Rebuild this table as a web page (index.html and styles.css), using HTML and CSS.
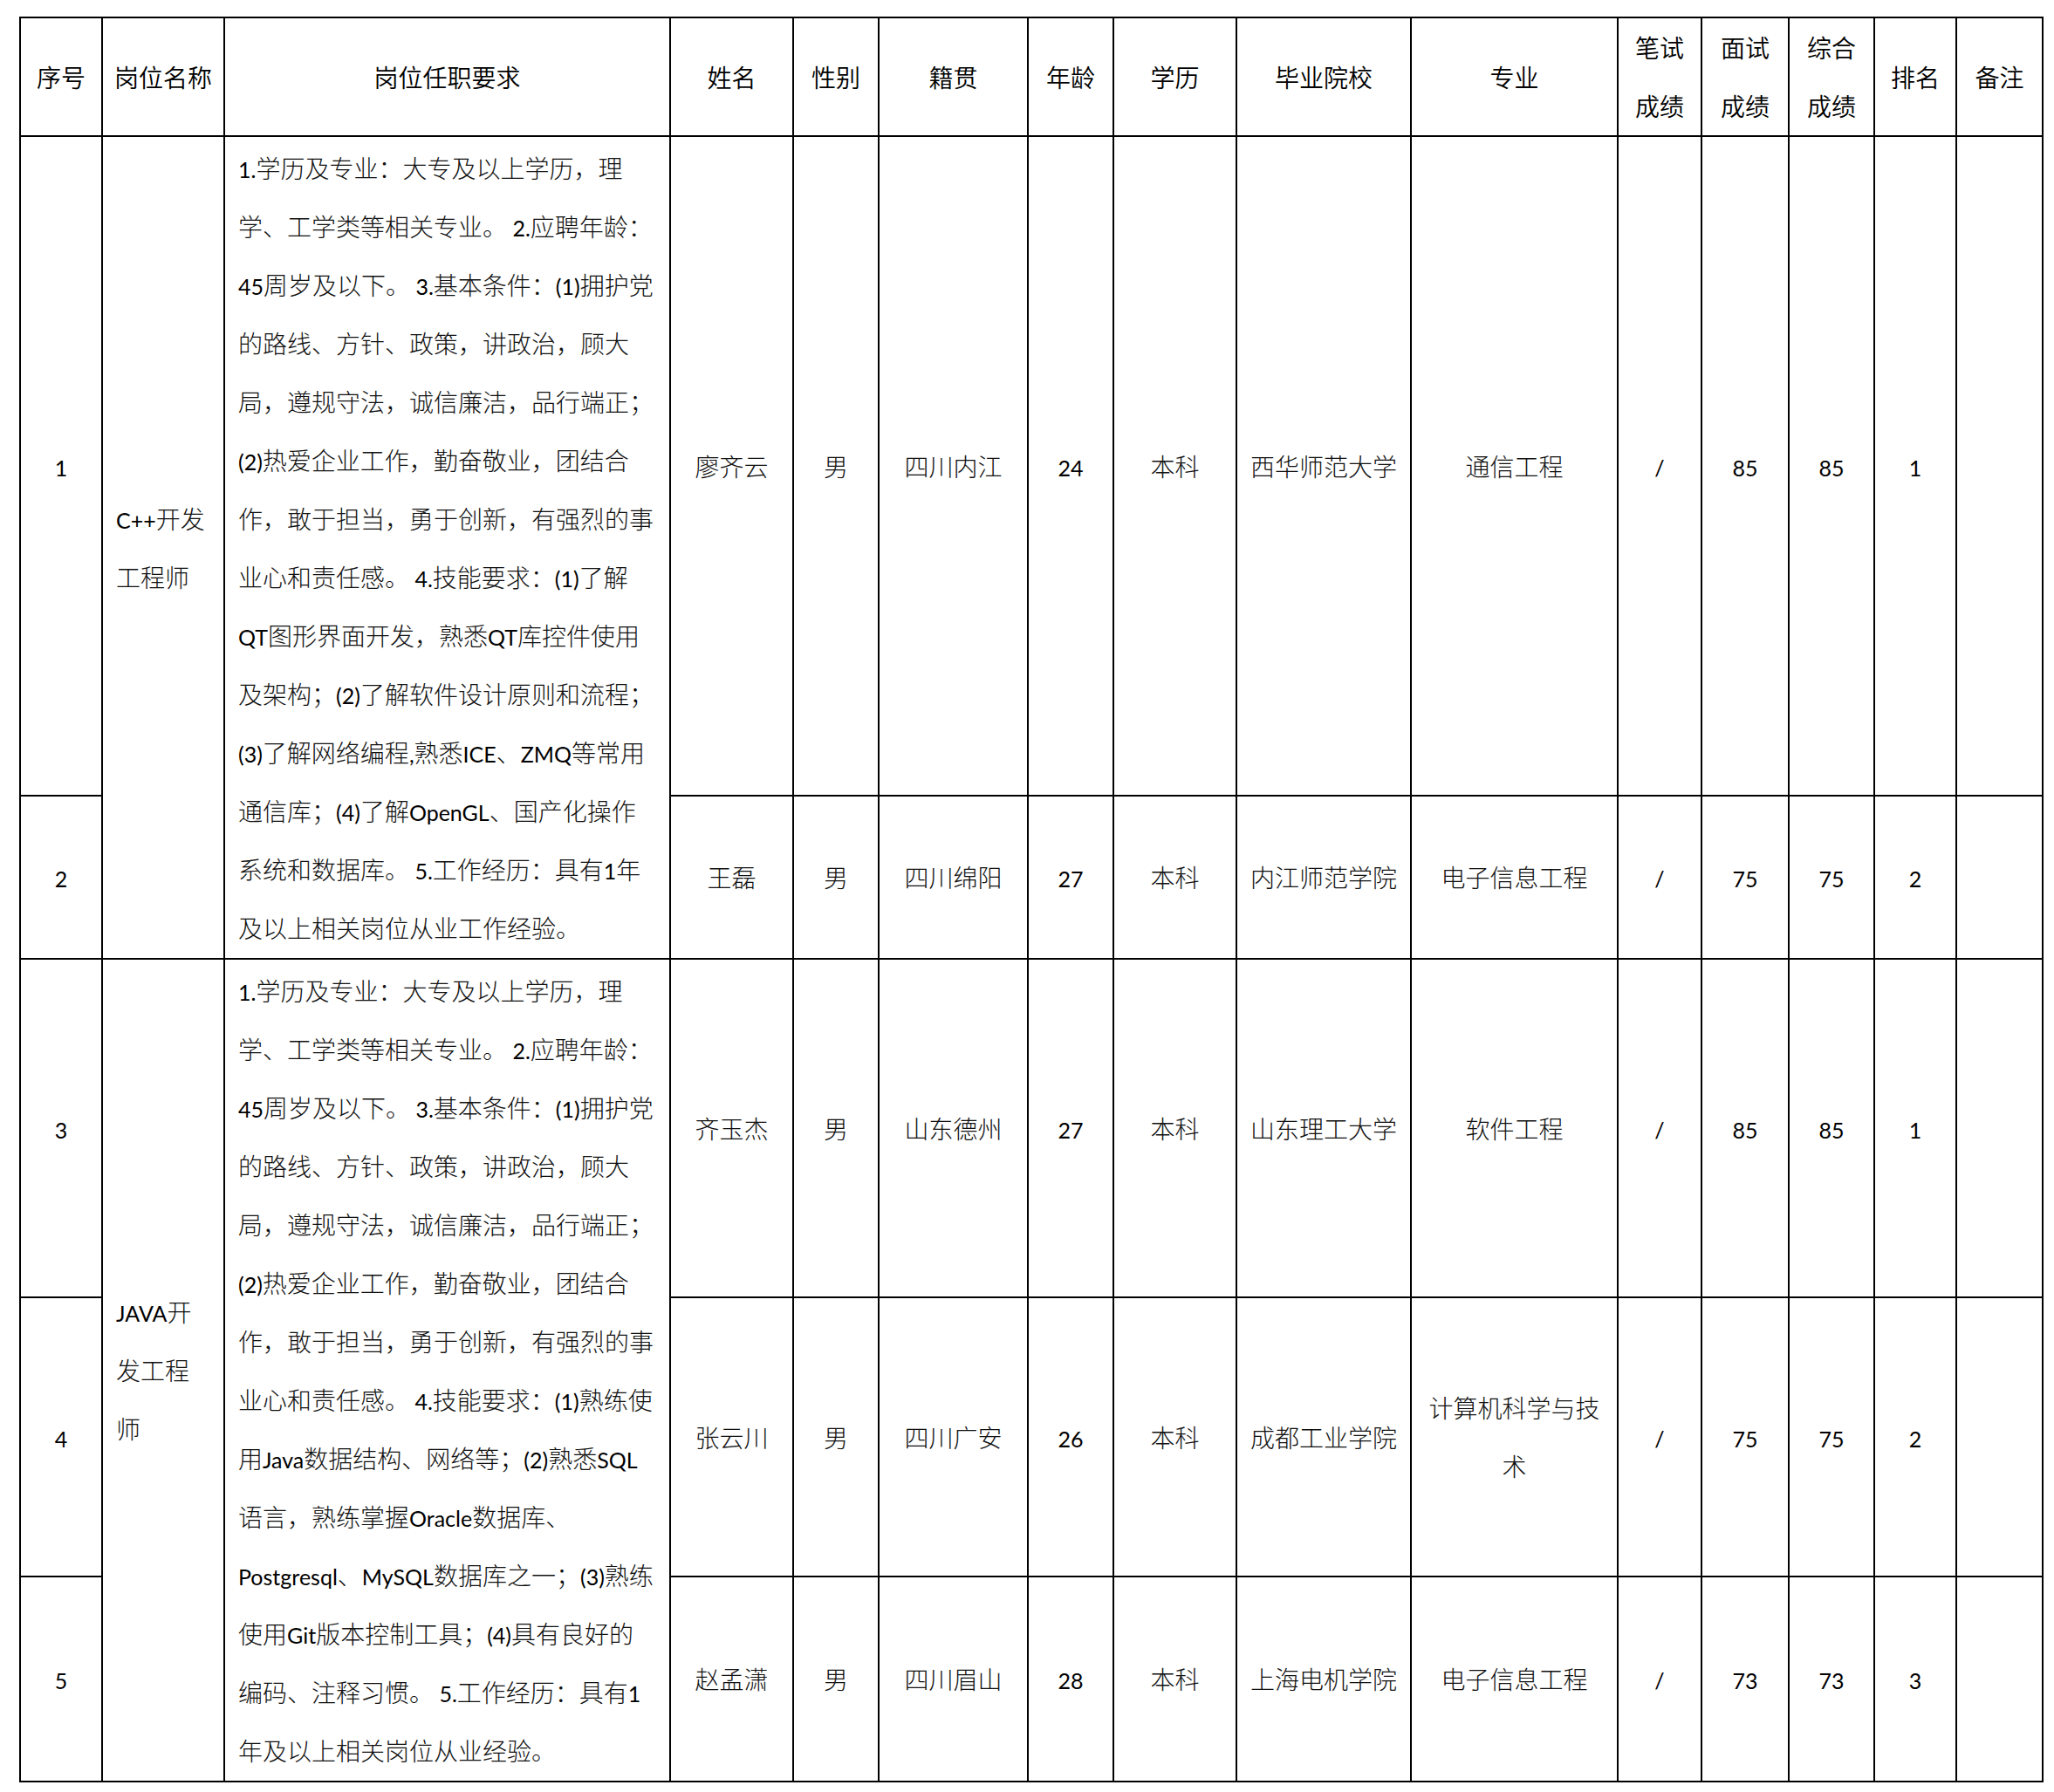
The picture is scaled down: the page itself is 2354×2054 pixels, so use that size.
FILE: index.html
```html
<!DOCTYPE html>
<html lang="zh-CN">
<head>
<meta charset="utf-8">
<title>面试成绩公示</title>
<link rel="stylesheet" href="styles.css">
</head>
<body>
<table class="sheet">
  <colgroup>
    <col class="c-no">
    <col class="c-post">
    <col class="c-req">
    <col class="c-name">
    <col class="c-sex">
    <col class="c-origin">
    <col class="c-age">
    <col class="c-edu">
    <col class="c-school">
    <col class="c-major">
    <col class="c-written">
    <col class="c-interview">
    <col class="c-total">
    <col class="c-rank">
    <col class="c-note">
  </colgroup>
  <thead>
    <tr class="r-head">
      <th>序号</th>
      <th>岗位名称</th>
      <th>岗位任职要求</th>
      <th>姓名</th>
      <th>性别</th>
      <th>籍贯</th>
      <th>年龄</th>
      <th>学历</th>
      <th>毕业院校</th>
      <th>专业</th>
      <th>笔试<br>成绩</th>
      <th>面试<br>成绩</th>
      <th>综合<br>成绩</th>
      <th>排名</th>
      <th>备注</th>
    </tr>
  </thead>
  <tbody>
    <tr class="r1">
      <td><span class="en">1</span></td>
      <td class="post" rowspan="2"><span class="en">C++</span>开发<br>工程师</td>
      <td class="req" rowspan="2">
        <div class="ln"><span class="en">1.</span>学历及专业：大专及以上学历，理</div>
        <div class="ln">学、工学类等相关专业。<span class="en"> 2.</span>应聘年龄：</div>
        <div class="ln"><span class="en">45</span>周岁及以下。<span class="en"> 3.</span>基本条件：<span class="en">(1)</span>拥护党</div>
        <div class="ln">的路线、方针、政策，讲政治，顾大</div>
        <div class="ln">局，遵规守法，诚信廉洁，品行端正；</div>
        <div class="ln"><span class="en">(2)</span>热爱企业工作，勤奋敬业，团结合</div>
        <div class="ln">作，敢于担当，勇于创新，有强烈的事</div>
        <div class="ln">业心和责任感。<span class="en"> 4.</span>技能要求：<span class="en">(1)</span>了解</div>
        <div class="ln"><span class="en">QT</span>图形界面开发，熟悉<span class="en">QT</span>库控件使用</div>
        <div class="ln">及架构；<span class="en">(2)</span>了解软件设计原则和流程；</div>
        <div class="ln"><span class="en">(3)</span>了解网络编程<span class="en">,</span>熟悉<span class="en">ICE</span>、<span class="en">ZMQ</span>等常用</div>
        <div class="ln">通信库；<span class="en">(4)</span>了解<span class="en">OpenGL</span>、国产化操作</div>
        <div class="ln">系统和数据库。<span class="en"> 5.</span>工作经历：具有<span class="en">1</span>年</div>
        <div class="ln">及以上相关岗位从业工作经验。</div>
      </td>
      <td>廖齐云</td>
      <td>男</td>
      <td>四川内江</td>
      <td><span class="en">24</span></td>
      <td>本科</td>
      <td>西华师范大学</td>
      <td>通信工程</td>
      <td><span class="en">/</span></td>
      <td><span class="en">85</span></td>
      <td><span class="en">85</span></td>
      <td><span class="en">1</span></td>
      <td></td>
    </tr>
    <tr class="r2">
      <td><span class="en">2</span></td>
      <td>王磊</td>
      <td>男</td>
      <td>四川绵阳</td>
      <td><span class="en">27</span></td>
      <td>本科</td>
      <td>内江师范学院</td>
      <td>电子信息工程</td>
      <td><span class="en">/</span></td>
      <td><span class="en">75</span></td>
      <td><span class="en">75</span></td>
      <td><span class="en">2</span></td>
      <td></td>
    </tr>
    <tr class="r3">
      <td><span class="en">3</span></td>
      <td class="post" rowspan="3"><span class="en">JAVA</span>开<br>发工程<br>师</td>
      <td class="req" rowspan="3">
        <div class="ln"><span class="en">1.</span>学历及专业：大专及以上学历，理</div>
        <div class="ln">学、工学类等相关专业。<span class="en"> 2.</span>应聘年龄：</div>
        <div class="ln"><span class="en">45</span>周岁及以下。<span class="en"> 3.</span>基本条件：<span class="en">(1)</span>拥护党</div>
        <div class="ln">的路线、方针、政策，讲政治，顾大</div>
        <div class="ln">局，遵规守法，诚信廉洁，品行端正；</div>
        <div class="ln"><span class="en">(2)</span>热爱企业工作，勤奋敬业，团结合</div>
        <div class="ln">作，敢于担当，勇于创新，有强烈的事</div>
        <div class="ln">业心和责任感。<span class="en"> 4.</span>技能要求：<span class="en">(1)</span>熟练使</div>
        <div class="ln">用<span class="en">Java</span>数据结构、网络等；<span class="en">(2)</span>熟悉<span class="en">SQL</span></div>
        <div class="ln">语言，熟练掌握<span class="en">Oracle</span>数据库、</div>
        <div class="ln"><span class="en">Postgresql</span>、<span class="en">MySQL</span>数据库之一；<span class="en">(3)</span>熟练</div>
        <div class="ln">使用<span class="en">Git</span>版本控制工具；<span class="en">(4)</span>具有良好的</div>
        <div class="ln">编码、注释习惯。<span class="en"> 5.</span>工作经历：具有<span class="en">1</span></div>
        <div class="ln">年及以上相关岗位从业经验。</div>
      </td>
      <td>齐玉杰</td>
      <td>男</td>
      <td>山东德州</td>
      <td><span class="en">27</span></td>
      <td>本科</td>
      <td>山东理工大学</td>
      <td>软件工程</td>
      <td><span class="en">/</span></td>
      <td><span class="en">85</span></td>
      <td><span class="en">85</span></td>
      <td><span class="en">1</span></td>
      <td></td>
    </tr>
    <tr class="r4">
      <td><span class="en">4</span></td>
      <td>张云川</td>
      <td>男</td>
      <td>四川广安</td>
      <td><span class="en">26</span></td>
      <td>本科</td>
      <td>成都工业学院</td>
      <td>计算机科学与技<br>术</td>
      <td><span class="en">/</span></td>
      <td><span class="en">75</span></td>
      <td><span class="en">75</span></td>
      <td><span class="en">2</span></td>
      <td></td>
    </tr>
    <tr class="r5">
      <td><span class="en">5</span></td>
      <td>赵孟潇</td>
      <td>男</td>
      <td>四川眉山</td>
      <td><span class="en">28</span></td>
      <td>本科</td>
      <td>上海电机学院</td>
      <td>电子信息工程</td>
      <td><span class="en">/</span></td>
      <td><span class="en">73</span></td>
      <td><span class="en">73</span></td>
      <td><span class="en">3</span></td>
      <td></td>
    </tr>
  </tbody>
</table>
</body>
</html>
```
FILE: styles.css
```css
html, body {
  margin: 0;
  padding: 0;
  background: #ffffff;
}

body {
  padding: 19px 0 0 22px;
}

.sheet {
  border-collapse: collapse;
  table-layout: fixed;
  width: 2319px;
  font-family: "Noto Sans CJK SC", "Noto Sans CJK TC", sans-serif;
  font-size: 28px;
  font-weight: 300;
  line-height: 67px;
  color: #111111;
}

.c-no { width: 94px; }
.c-post { width: 140px; }
.c-req { width: 511px; }
.c-name { width: 141px; }
.c-sex { width: 98px; }
.c-origin { width: 171px; }
.c-age { width: 98px; }
.c-edu { width: 141px; }
.c-school { width: 200px; }
.c-major { width: 237px; }
.c-written { width: 96px; }
.c-interview { width: 100px; }
.c-total { width: 98px; }
.c-rank { width: 94px; }
.c-note { width: 99px; }

.sheet th,
.sheet td {
  border: 2px solid #000000;
  padding: 0;
  text-align: center;
  vertical-align: middle;
}

.sheet th {
  font-weight: 350;
  color: #000000;
}

.r-head { height: 135px; }
.r1 { height: 756px; }
.r2 { height: 187px; }
.r3 { height: 388px; }
.r4 { height: 320px; }
.r5 { height: 235px; }

.sheet td.post {
  text-align: left;
  padding-left: 15px;
}

.sheet td.req {
  text-align: left;
  padding-left: 15px;
}

.ln {
  height: 67px;
  white-space: nowrap;
}

.en {
  font-family: "Lato", "Liberation Sans", sans-serif;
  font-size: 25px;
  font-weight: 400;
  line-height: 1;
  color: #000000;
}
```
